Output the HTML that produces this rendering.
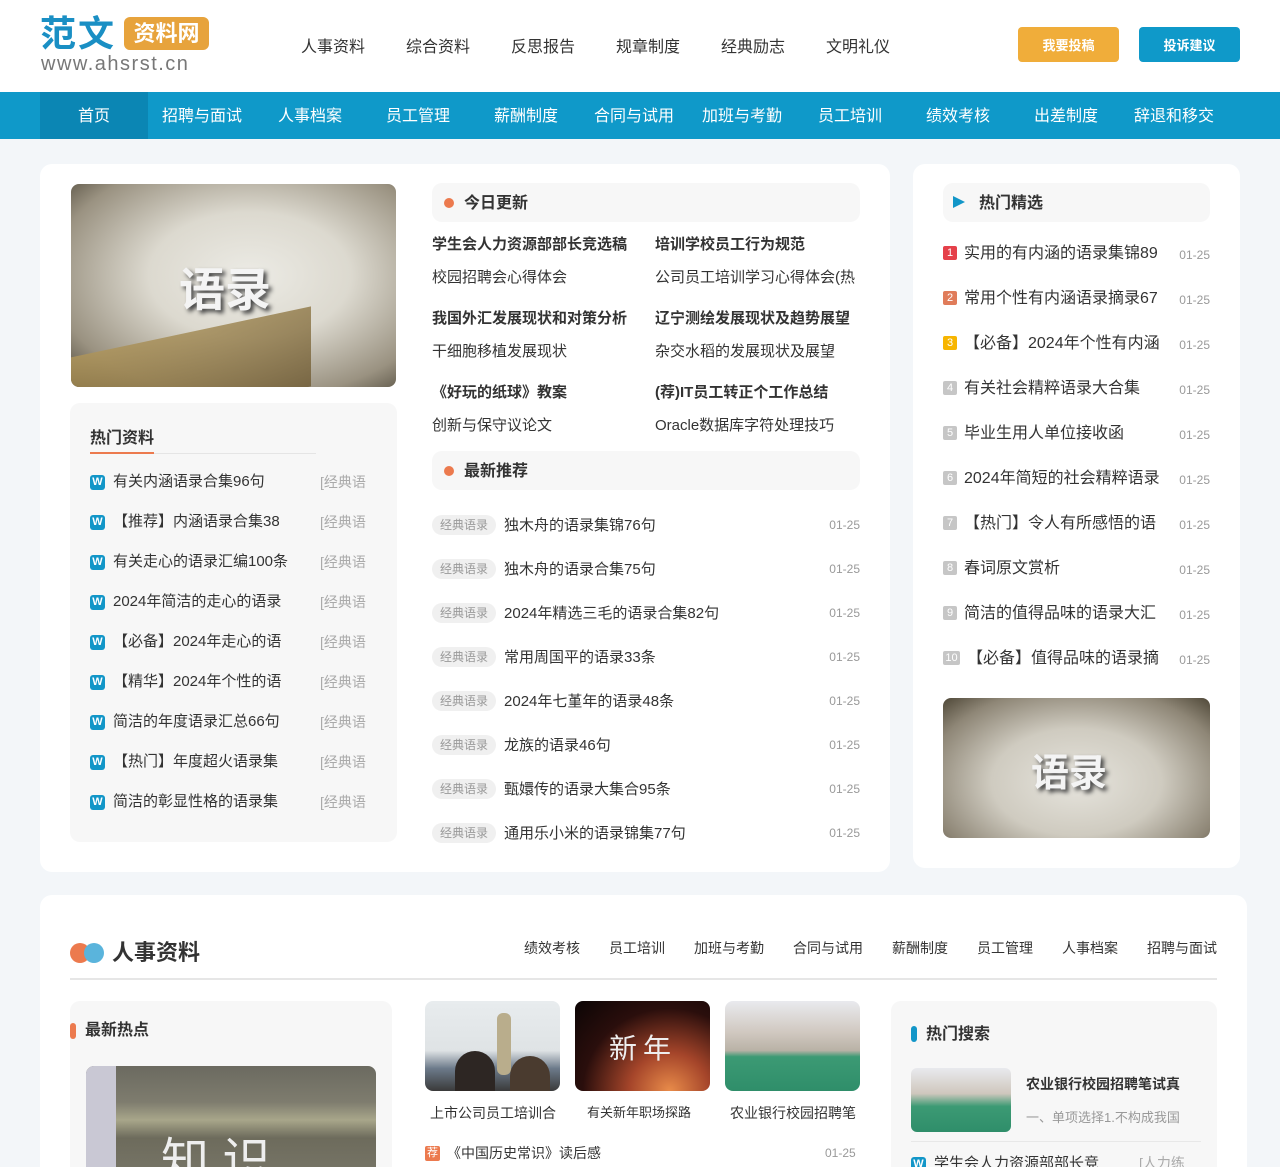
<!DOCTYPE html>
<html><head><meta charset="utf-8">
<style>
*{margin:0;padding:0;box-sizing:border-box}
html,body{width:1280px;height:1167px;overflow:hidden}
body{background:#f3f6f9;font-family:"Liberation Sans","Noto Sans CJK SC",sans-serif;color:#333;position:relative}
.a{position:absolute;white-space:nowrap}
.hdr{position:absolute;left:0;top:0;width:1280px;height:92px;background:#fff}
.nav{position:absolute;left:0;top:92px;width:1280px;height:47px;background:#0f99c9}
.nav span{position:absolute;top:0;width:108px;height:47px;line-height:50px;text-align:center;color:#fff;font-size:16px}
.panel{position:absolute;background:#fff;border-radius:12px}
.box{position:absolute;background:#f7f7f7;border-radius:10px}
.f14{font-size:14px}.f15{font-size:15px}.f16{font-size:16px}
.w{display:inline-block;width:15px;height:15px;background:#1296c8;color:#fff;border-radius:3px;font-size:11px;line-height:15px;text-align:center;font-weight:bold;vertical-align:1px;margin-right:8px}
.gray{color:#aaa;font-size:14px}
.tag{display:inline-block;background:#f0f0f0;color:#999;font-size:12px;border-radius:10px;padding:0 8px;height:20px;line-height:20px;margin-right:8px;vertical-align:1px}
.num{display:inline-block;width:14px;height:14px;color:#fff;font-size:11px;line-height:14px;text-align:center;border-radius:2px;margin-right:7px;vertical-align:2px}
.date{color:#999;font-size:12px}
.dot{display:inline-block;width:10px;height:10px;border-radius:5px;background:#ec7a4e;margin-right:10px}
.img{position:absolute;border-radius:8px;overflow:hidden}
</style></head><body>
<div class="hdr"></div>
<div class="a" style="left:40px;top:14px;font-size:36px;font-weight:bold;color:#1a8fc4;letter-spacing:2px;line-height:40px">范文</div>
<div class="a" style="left:124px;top:17px;width:85px;height:33px;background:#e7a33c;border-radius:6px;color:#fff;font-size:22px;font-weight:bold;line-height:33px;text-align:center">资料网</div>
<div class="a" style="left:41px;top:52px;font-size:20px;color:#777;letter-spacing:1.5px;font-family:'Liberation Sans',sans-serif;line-height:24px">www.ahsrst.cn</div>
<div class="a" style="top:38px;left:301px;font-size:16px;line-height:20px">
<span style="position:absolute;left:0">人事资料</span><span style="position:absolute;left:105px">综合资料</span><span style="position:absolute;left:210px">反思报告</span><span style="position:absolute;left:315px">规章制度</span><span style="position:absolute;left:420px">经典励志</span><span style="position:absolute;left:525px">文明礼仪</span></div>
<div class="a" style="left:1018px;top:27px;width:101px;height:35px;background:#f0ad3a;border-radius:4px;color:#fff;font-size:13px;font-weight:bold;line-height:37px;text-align:center">我要投稿</div>
<div class="a" style="left:1139px;top:27px;width:101px;height:35px;background:#0f99c9;border-radius:4px;color:#fff;font-size:13px;font-weight:bold;line-height:37px;text-align:center">投诉建议</div>

<div class="nav">
<span style="left:40px;background:#0b86b4">首页</span><span style="left:148px">招聘与面试</span><span style="left:256px">人事档案</span><span style="left:364px">员工管理</span><span style="left:472px">薪酬制度</span><span style="left:580px">合同与试用</span><span style="left:688px">加班与考勤</span><span style="left:796px">员工培训</span><span style="left:904px">绩效考核</span><span style="left:1012px">出差制度</span><span style="left:1120px">辞退和移交</span>
</div>

<div class="panel" style="left:40px;top:164px;width:850px;height:708px"></div>
<div class="panel" style="left:913px;top:164px;width:327px;height:704px"></div>

<div class="img" style="left:71px;top:184px;width:325px;height:203px;background:radial-gradient(ellipse at 55% 45%,#ecebe5 0%,#dcd9cf 40%,#9a9281 78%,#4a4436 100%)">
<div style="position:absolute;left:-20px;top:150px;width:260px;height:80px;background:linear-gradient(160deg,#b59a5c,#6e5a33);transform:skewY(-12deg);opacity:.8"></div>
<div style="position:absolute;left:108px;top:70px;font-size:46px;font-weight:bold;color:#f4f4f4;text-shadow:3px 3px 4px #444">语录</div></div>

<div class="box" style="left:70px;top:403px;width:327px;height:439px"></div>
<div class="a" style="left:90px;top:429px;font-size:16px;font-weight:bold;line-height:20px">热门资料</div>
<div class="a" style="left:90px;top:453px;width:226px;height:1px;background:#e5e5e5"></div>
<div class="a" style="left:90px;top:452px;width:64px;height:2px;background:#ec7a4e"></div>
<div class="a f15" style="left:90px;top:472px;line-height:20px">
<div style="position:relative;height:40px"><span class="w">W</span>有关内涵语录合集96句<span class="gray" style="position:absolute;left:230px">[经典语</span></div>
<div style="position:relative;height:40px"><span class="w">W</span>【推荐】内涵语录合集38<span class="gray" style="position:absolute;left:230px">[经典语</span></div>
<div style="position:relative;height:40px"><span class="w">W</span>有关走心的语录汇编100条<span class="gray" style="position:absolute;left:230px">[经典语</span></div>
<div style="position:relative;height:40px"><span class="w">W</span>2024年简洁的走心的语录<span class="gray" style="position:absolute;left:230px">[经典语</span></div>
<div style="position:relative;height:40px"><span class="w">W</span>【必备】2024年走心的语<span class="gray" style="position:absolute;left:230px">[经典语</span></div>
<div style="position:relative;height:40px"><span class="w">W</span>【精华】2024年个性的语<span class="gray" style="position:absolute;left:230px">[经典语</span></div>
<div style="position:relative;height:40px"><span class="w">W</span>简洁的年度语录汇总66句<span class="gray" style="position:absolute;left:230px">[经典语</span></div>
<div style="position:relative;height:40px"><span class="w">W</span>【热门】年度超火语录集<span class="gray" style="position:absolute;left:230px">[经典语</span></div>
<div style="position:relative;height:40px"><span class="w">W</span>简洁的彰显性格的语录集<span class="gray" style="position:absolute;left:230px">[经典语</span></div>
</div>

<div class="box" style="left:432px;top:183px;width:428px;height:39px"></div>
<div class="a" style="left:444px;top:194px;font-size:16px;font-weight:bold;line-height:20px"><span class="dot"></span>今日更新</div>
<div class="a f15" style="left:432px;top:235px;line-height:20px">
<div style="position:absolute;top:0;font-weight:bold">学生会人力资源部部长竞选稿</div>
<div style="position:absolute;top:0;left:223px;font-weight:bold">培训学校员工行为规范</div>
<div style="position:absolute;top:33px">校园招聘会心得体会</div>
<div style="position:absolute;top:33px;left:223px">公司员工培训学习心得体会(热</div>
<div style="position:absolute;top:74px;font-weight:bold">我国外汇发展现状和对策分析</div>
<div style="position:absolute;top:74px;left:223px;font-weight:bold">辽宁测绘发展现状及趋势展望</div>
<div style="position:absolute;top:107px">干细胞移植发展现状</div>
<div style="position:absolute;top:107px;left:223px">杂交水稻的发展现状及展望</div>
<div style="position:absolute;top:148px;font-weight:bold">《好玩的纸球》教案</div>
<div style="position:absolute;top:148px;left:223px;font-weight:bold">(荐)IT员工转正个工作总结</div>
<div style="position:absolute;top:181px">创新与保守议论文</div>
<div style="position:absolute;top:181px;left:223px">Oracle数据库字符处理技巧</div>
</div>
<div class="box" style="left:432px;top:451px;width:428px;height:39px"></div>
<div class="a" style="left:444px;top:462px;font-size:16px;font-weight:bold;line-height:20px"><span class="dot"></span>最新推荐</div>
<div class="a f15" style="left:432px;top:515px;width:428px;line-height:20px">
<div style="position:relative;height:44px"><span class="tag">经典语录</span>独木舟的语录集锦76句<span class="date" style="position:absolute;right:0">01-25</span></div>
<div style="position:relative;height:44px"><span class="tag">经典语录</span>独木舟的语录合集75句<span class="date" style="position:absolute;right:0">01-25</span></div>
<div style="position:relative;height:44px"><span class="tag">经典语录</span>2024年精选三毛的语录合集82句<span class="date" style="position:absolute;right:0">01-25</span></div>
<div style="position:relative;height:44px"><span class="tag">经典语录</span>常用周国平的语录33条<span class="date" style="position:absolute;right:0">01-25</span></div>
<div style="position:relative;height:44px"><span class="tag">经典语录</span>2024年七堇年的语录48条<span class="date" style="position:absolute;right:0">01-25</span></div>
<div style="position:relative;height:44px"><span class="tag">经典语录</span>龙族的语录46句<span class="date" style="position:absolute;right:0">01-25</span></div>
<div style="position:relative;height:44px"><span class="tag">经典语录</span>甄嬛传的语录大集合95条<span class="date" style="position:absolute;right:0">01-25</span></div>
<div style="position:relative;height:44px"><span class="tag">经典语录</span>通用乐小米的语录锦集77句<span class="date" style="position:absolute;right:0">01-25</span></div>
</div>

<div class="box" style="left:943px;top:183px;width:267px;height:39px"></div>
<div class="a" style="left:953px;top:194px;font-size:16px;font-weight:bold;line-height:20px"><span style="display:inline-block;width:0;height:0;border-left:12px solid #1296c8;border-top:6px solid transparent;border-bottom:6px solid transparent;margin-right:14px"></span>热门精选</div>
<div class="a f16" style="left:943px;top:244px;width:267px;line-height:20px">
<div style="position:relative;height:45px"><span class="num" style="background:#e5404a">1</span>实用的有内涵的语录集锦89<span class="date" style="position:absolute;right:0;top:1px">01-25</span></div>
<div style="position:relative;height:45px"><span class="num" style="background:#e07c5a">2</span>常用个性有内涵语录摘录67<span class="date" style="position:absolute;right:0;top:1px">01-25</span></div>
<div style="position:relative;height:45px"><span class="num" style="background:#f7b500">3</span>【必备】2024年个性有内涵<span class="date" style="position:absolute;right:0;top:1px">01-25</span></div>
<div style="position:relative;height:45px"><span class="num" style="background:#c6c6c6">4</span>有关社会精粹语录大合集<span class="date" style="position:absolute;right:0;top:1px">01-25</span></div>
<div style="position:relative;height:45px"><span class="num" style="background:#c6c6c6">5</span>毕业生用人单位接收函<span class="date" style="position:absolute;right:0;top:1px">01-25</span></div>
<div style="position:relative;height:45px"><span class="num" style="background:#c6c6c6">6</span>2024年简短的社会精粹语录<span class="date" style="position:absolute;right:0;top:1px">01-25</span></div>
<div style="position:relative;height:45px"><span class="num" style="background:#c6c6c6">7</span>【热门】令人有所感悟的语<span class="date" style="position:absolute;right:0;top:1px">01-25</span></div>
<div style="position:relative;height:45px"><span class="num" style="background:#c6c6c6">8</span>春词原文赏析<span class="date" style="position:absolute;right:0;top:1px">01-25</span></div>
<div style="position:relative;height:45px"><span class="num" style="background:#c6c6c6">9</span>简洁的值得品味的语录大汇<span class="date" style="position:absolute;right:0;top:1px">01-25</span></div>
<div style="position:relative;height:45px"><span class="num" style="background:#c6c6c6;width:17px">10</span>【必备】值得品味的语录摘<span class="date" style="position:absolute;right:0;top:1px">01-25</span></div>
</div>
<div class="img" style="left:943px;top:698px;width:267px;height:140px;background:radial-gradient(ellipse at 50% 60%,#e6e4dd 0%,#cfcbc0 45%,#8e8676 80%,#4f4838 100%)">
<div style="position:absolute;left:88px;top:44px;font-size:38px;font-weight:bold;color:#f4f4f4;text-shadow:3px 3px 4px #444">语录</div></div>

<div class="panel" style="left:40px;top:895px;width:1207px;height:300px"></div>
<div class="a" style="left:70px;top:943px;width:20px;height:20px;border-radius:10px;background:#ec7a4e"></div>
<div class="a" style="left:84px;top:943px;width:20px;height:20px;border-radius:10px;background:#5ab4dc"></div>
<div class="a" style="left:112px;top:940px;font-size:22px;font-weight:bold;line-height:26px">人事资料</div>
<div class="a f14" style="top:939px;left:0;line-height:18px">
<span class="a" style="left:524px">绩效考核</span><span class="a" style="left:609px">员工培训</span><span class="a" style="left:694px">加班与考勤</span><span class="a" style="left:793px">合同与试用</span><span class="a" style="left:892px">薪酬制度</span><span class="a" style="left:977px">员工管理</span><span class="a" style="left:1062px">人事档案</span><span class="a" style="left:1147px">招聘与面试</span></div>
<div class="a" style="left:70px;top:978px;width:1147px;height:2px;background:#e6e6e6"></div>

<div class="box" style="left:70px;top:1001px;width:322px;height:200px"></div>
<div class="a" style="left:70px;top:1023px;width:6px;height:16px;border-radius:3px;background:#ec7a4e"></div>
<div class="a" style="left:85px;top:1021px;font-size:16px;font-weight:bold;line-height:20px">最新热点</div>
<div class="img" style="left:86px;top:1066px;width:290px;height:120px;background:linear-gradient(180deg,#6b6a60 0%,#7e7c6e 30%,#a8a68a 45%,#6d6b5c 60%,#7a786a 100%)">
<div style="position:absolute;left:0;top:0;width:30px;height:120px;background:#c9c8d4"></div>
<div style="position:absolute;left:75px;top:55px;font-size:48px;color:#eee">知 识</div></div>

<div class="img" style="left:425px;top:1001px;width:135px;height:90px;background:linear-gradient(180deg,#e8ecee 0%,#dfe3e5 55%,#6c7a8a 75%,#3a3a3a 100%)">
<div style="position:absolute;left:72px;top:12px;width:14px;height:62px;background:#b9ad8c;border-radius:6px"></div>
<div style="position:absolute;left:30px;top:50px;width:40px;height:45px;background:#2d2623;border-radius:20px 20px 0 0"></div>
<div style="position:absolute;left:85px;top:55px;width:40px;height:40px;background:#4a3b2f;border-radius:20px 20px 0 0"></div></div>
<div class="img" style="left:575px;top:1001px;width:135px;height:90px;background:radial-gradient(ellipse at 70% 100%,#e98c4a 0%,#a5452a 30%,#2a0e0c 65%,#0b0505 100%)">
<div style="position:absolute;left:34px;top:26px;font-size:28px;color:#eee;letter-spacing:6px">新年</div></div>
<div class="img" style="left:725px;top:1001px;width:135px;height:90px;background:linear-gradient(180deg,#e9eaee 0%,#d0c8c0 35%,#b9b2a6 55%,#3c9a74 62%,#2f8e6a 100%)"></div>
<div class="a f14" style="left:430px;top:1104px;line-height:18px">上市公司员工培训合</div>
<div class="a" style="left:587px;top:1104px;line-height:18px;font-size:13px">有关新年职场探路</div>
<div class="a f14" style="left:730px;top:1104px;line-height:18px">农业银行校园招聘笔</div>
<div class="a f14" style="left:425px;top:1144px;line-height:18px"><span class="num" style="background:#ec7a4e;width:15px;height:15px">荐</span>《中国历史常识》读后感</div>
<div class="a date" style="left:825px;top:1146px">01-25</div>

<div class="box" style="left:891px;top:1001px;width:326px;height:200px"></div>
<div class="a" style="left:911px;top:1026px;width:6px;height:16px;border-radius:3px;background:#1296c8"></div>
<div class="a" style="left:926px;top:1025px;font-size:16px;font-weight:bold;line-height:20px">热门搜索</div>
<div class="img" style="left:911px;top:1068px;width:100px;height:64px;border-radius:6px;background:linear-gradient(180deg,#e9eaee 0%,#cfc7bd 40%,#3c9a74 60%,#2f8e6a 100%)"></div>
<div class="a f14" style="left:1026px;top:1075px;font-weight:bold;line-height:18px">农业银行校园招聘笔试真</div>
<div class="a" style="left:1026px;top:1110px;font-size:13px;color:#999;line-height:16px">一、单项选择1.不构成我国</div>
<div class="a" style="left:911px;top:1141px;width:290px;height:1px;background:#e8e8e8"></div>
<div class="a f15" style="left:911px;top:1154px;line-height:18px"><span class="w">W</span>学生会人力资源部部长竞<span class="gray" style="margin-left:40px">[人力练</span></div>
</body></html>
